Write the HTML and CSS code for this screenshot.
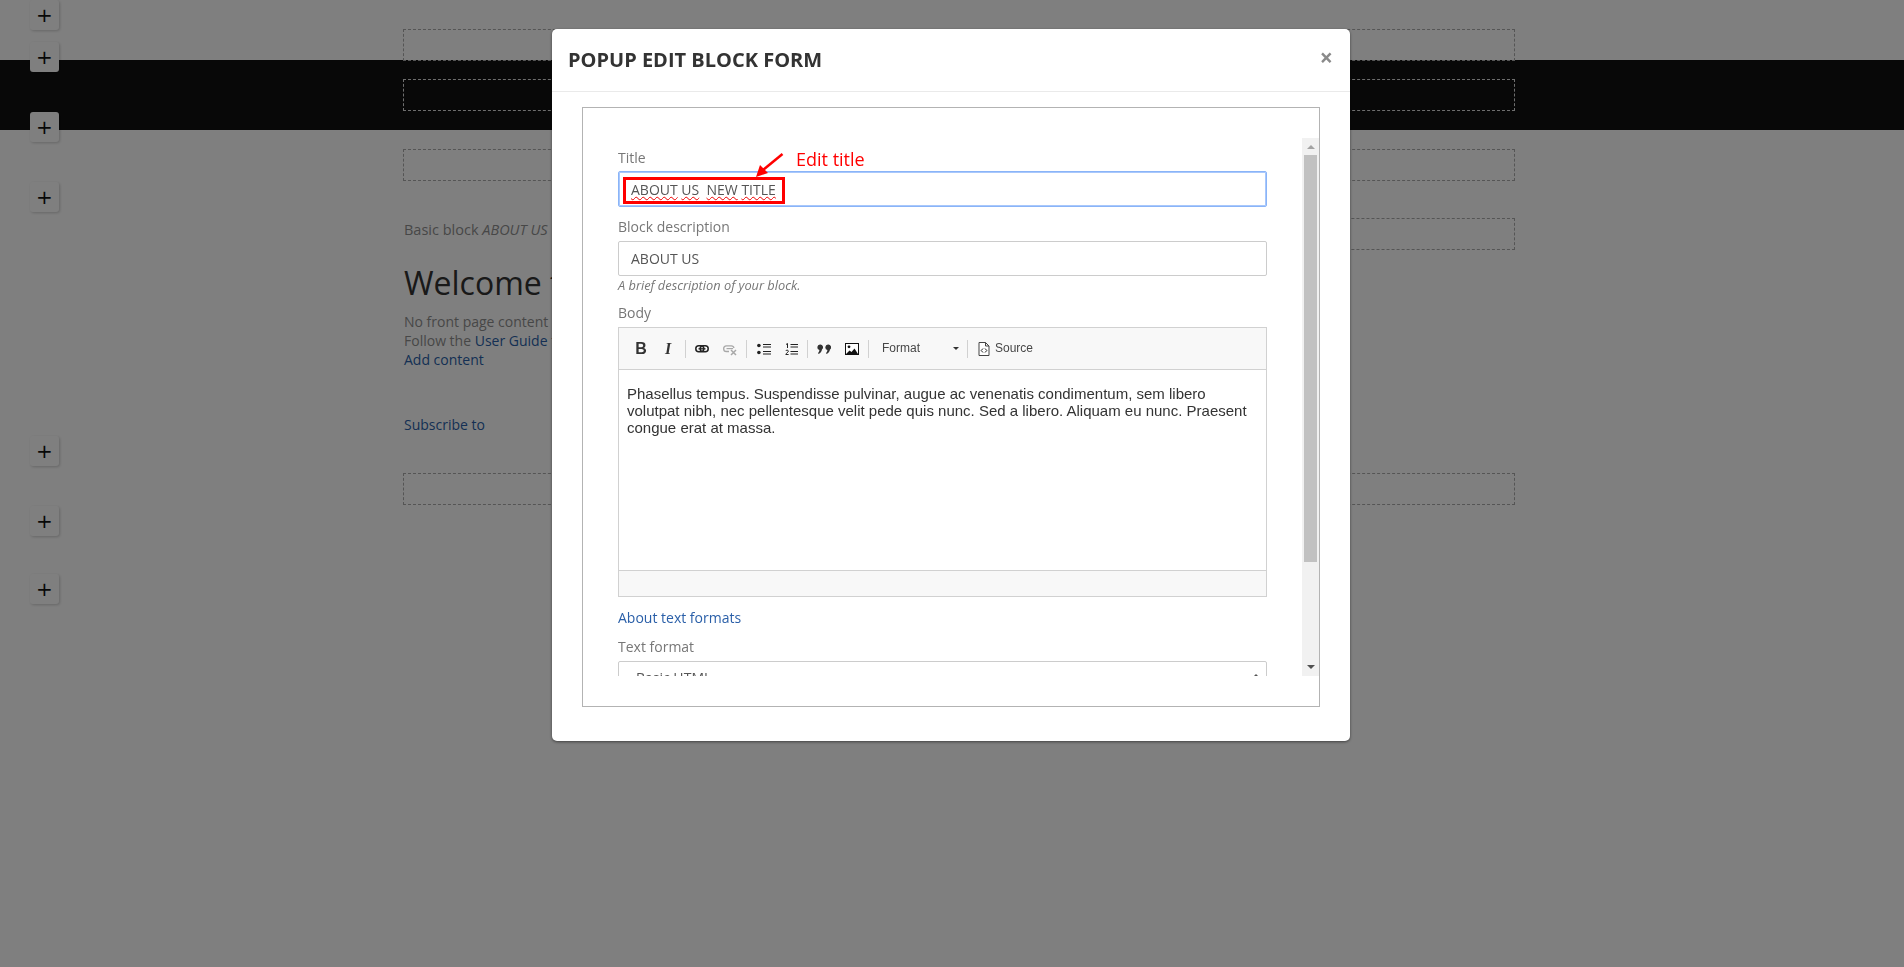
FILE: index.html
```html
<!DOCTYPE html>
<html lang="en">
    <head>
        <meta charset="UTF-8" />
        <title>Popup edit block form</title>
        <link rel="stylesheet" href="styles.css">
    </head>
    <body>
        <div class="page">
            <div class="rail">
                <button class="add add-1">+</button>
                <button class="add add-2">+</button>
                <button class="add add-3">+</button>
                <button class="add add-4">+</button>
                <button class="add add-5">+</button>
                <button class="add add-6">+</button>
                <button class="add add-7">+</button>
            </div>

            <div class="content">
                <div class="slot slot-1"></div>
                <div class="slot slot-2"></div>
                <div class="slot slot-3"></div>

                <div class="columns">
                    <div class="main">
                        <p class="block-note">Basic block <em>ABOUT US</em></p>
                        <h1>Welcome to</h1>
                        <p>No front page content<br>
                        Follow the <a href="#">User Guide</a> to<br>
                        <a href="#">Add content</a></p>
                        <p class="subscribe"><a href="#">Subscribe to</a></p>
                    </div>
                    <div class="slot slot-side"></div>
                </div>

                <div class="slot slot-last"></div>
            </div>
        </div>

        <div class="overlay">
            <div class="modal">
                <div class="modal-head">
                    <h2>Popup edit block form</h2>
                    <span class="close">×</span>
                </div>

                <div class="frame">
                    <div class="form">
                        <div class="field field-title">
                            <label>Title</label>
                            <div class="input input-focus">
                                <span class="typo">ABOUT</span> <span class="typo">US</span>&nbsp; <span class="typo">NEW</span> <span class="typo">TITLE</span>
                            </div>
                            <div class="mark-box"></div>
                            <svg class="mark-arrow" width="34" height="28" viewBox="0 0 34 28">
                                <path d="M29.5 2 L10 18" stroke="#f00" stroke-width="2.5" fill="none" />
                                <path d="M3 25 L7 13 L15 21 Z" fill="#f00" />
                            </svg>
                            <span class="mark-text">Edit title</span>
                        </div>

                        <div class="field field-desc">
                            <label>Block description</label>
                            <div class="input">ABOUT US</div>
                            <div class="hint">A brief description of your block.</div>
                        </div>

                        <div class="field field-body">
                            <label>Body</label>
                            <div class="editor">
                                <div class="toolbar">
                                    <span class="tool tool-b">B</span>
                                    <span class="tool tool-i">I</span>
                                    <span class="sep sep-1"></span>
                                    <svg class="icon icon-link" width="14" height="16" viewBox="0 0 14 16">
                                        <rect x="0.8" y="4.8" width="8" height="6" rx="3" fill="none" stroke="#222" stroke-width="1.5" />
                                        <rect x="5.2" y="4.8" width="8" height="6" rx="3" fill="none" stroke="#222" stroke-width="1.5" />
                                        <path d="M3.5 7.8 H10.5" stroke="#222" stroke-width="1.3" />
                                    </svg>
                                    <svg class="icon icon-unlink" width="14" height="16" viewBox="0 0 14 16">
                                        <path d="M6 10.5 H3.5 A2.8 2.8 0 0 1 3.5 4.8 H8 A2.8 2.8 0 0 1 11 7" fill="none" stroke="#a8a8a8" stroke-width="1.3" />
                                        <path d="M3.5 7.6 H10" stroke="#a8a8a8" stroke-width="1.2" />
                                        <path d="M8 9 L13 14 M13 9 L8 14" stroke="#a8a8a8" stroke-width="1.5" />
                                    </svg>
                                    <span class="sep sep-2"></span>
                                    <svg class="icon icon-bullets" width="14" height="16" viewBox="0 0 14 16">
                                        <circle cx="1.9" cy="4.5" r="1.8" fill="#222" />
                                        <circle cx="1.9" cy="11.5" r="1.8" fill="#222" />
                                        <path d="M6 3.5 H14 M6 6 H14 M6 10.5 H14 M6 13 H14" stroke="#222" stroke-width="1" />
                                    </svg>
                                    <svg class="icon icon-numbers" width="13" height="16" viewBox="0 0 13 16">
                                        <path d="M1 3.5 L2.5 2.5 V7 M5.5 3.5 H13 M5.5 6 H13 M5.5 10.5 H13 M5.5 13 H13" stroke="#222" stroke-width="1" fill="none" />
                                        <path d="M0.8 10 C1 8.8 3.4 8.8 3.4 10.2 C3.4 11.4 1 12 0.8 13.5 H3.6" stroke="#222" stroke-width="1" fill="none" />
                                    </svg>
                                    <span class="sep sep-3"></span>
                                    <svg class="icon icon-quote" width="14" height="16" viewBox="0 0 14 16">
                                        <path d="M3 3.5 A2.8 2.8 0 0 1 5 8.5 C4.6 10.5 3.4 12 1.6 13 L1 12 C1.8 11.2 2.3 10.4 2.4 9 A2.8 2.8 0 0 1 3 3.5 Z" fill="#333" />
                                        <path d="M11 3.5 A2.8 2.8 0 0 1 13 8.5 C12.6 10.5 11.4 12 9.6 13 L9 12 C9.8 11.2 10.3 10.4 10.4 9 A2.8 2.8 0 0 1 11 3.5 Z" fill="#333" />
                                    </svg>
                                    <svg class="icon icon-image" width="14" height="16" viewBox="0 0 14 16">
                                        <rect x="0.5" y="2.5" width="13" height="11" fill="#fff" stroke="#111" />
                                        <circle cx="4" cy="5.8" r="1.4" fill="#111" />
                                        <path d="M1 13 L4.5 9.5 L6.5 11 L9.5 7.5 L13 13 Z" fill="#111" />
                                    </svg>
                                    <span class="sep sep-4"></span>
                                    <span class="combo">Format</span>
                                    <span class="combo-arrow"></span>
                                    <span class="sep sep-5"></span>
                                    <svg class="icon icon-source" width="12" height="16" viewBox="0 0 12 16">
                                        <path d="M1 1.5 H7.5 L11 5 V14.5 H1 Z M7.5 1.5 V5 H11" fill="#fff" stroke="#444" />
                                        <path d="M5 7.5 L3.2 9.5 L5 11.5 M7 7.5 L8.8 9.5 L7 11.5" fill="none" stroke="#222" />
                                    </svg>
                                    <span class="source">Source</span>
                                </div>
                                <div class="editor-text">Phasellus tempus. Suspendisse pulvinar, augue ac venenatis condimentum, sem libero volutpat nibh, nec pellentesque velit pede quis nunc. Sed a libero. Aliquam eu nunc. Praesent congue erat at massa.</div>
                                <div class="editor-foot"></div>
                            </div>
                        </div>

                        <a class="about" href="#">About text formats</a>

                        <div class="field field-format">
                            <label>Text format</label>
                            <div class="input select">Basic HTML</div>
                        </div>
                    </div>

                    <div class="scrollbar">
                        <span class="sb-btn"><i class="sb-up"></i></span>
                        <span class="sb-thumb"></span>
                        <span class="sb-rest"><i class="sb-down"></i></span>
                    </div>
                </div>
            </div>
        </div>
    </body>
</html>
```

FILE: styles.css
```css
html, body {
    margin: 0;
    height: 100%;
    overflow: hidden;
}
body {
    font-family: "Open Sans", sans-serif;
    font-size: 14px;
    line-height: 19px;
    color: #8f8f8f;
    background: #fff;
}
a {
    color: #2a5fa8;
    text-decoration: none;
}

/* page behind the popup */
.page {
    display: flex;
    height: 967px;
    background: linear-gradient(#fff 60px, #111 60px, #111 130px, #fff 130px);
}
.rail {
    width: 403px;
    padding-left: 30px;
    box-sizing: border-box;
    display: flex;
    flex-direction: column;
    align-items: flex-start;
}
.add {
    width: 29px;
    height: 30px;
    padding: 0;
    border: 0;
    border-radius: 3px;
    background: #fff;
    box-shadow: 1px 1px 3px rgba(0, 0, 0, 0.2);
    font-family: "DejaVu Sans", sans-serif;
    font-size: 20px;
    line-height: 28px;
    color: #111;
}
.add-2 { margin-top: 12px; }
.add-3 { margin-top: 40px; }
.add-4 { margin-top: 40px; }
.add-5 { margin-top: 224px; }
.add-6 { margin-top: 40px; }
.add-7 { margin-top: 38px; }

.content {
    width: 1112px;
}
.slot {
    height: 32px;
    border: 1px dashed #aaa;
    box-sizing: border-box;
}
.slot-1 { margin-top: 29px; }
.slot-2 { margin-top: 18px; border-color: #ddd; }
.slot-3 { margin-top: 38px; }
.columns {
    display: flex;
    justify-content: space-between;
    margin-top: 38px;
}
.main {
    width: 148px;
    margin-top: 1px;
    padding-left: 1px;
    white-space: nowrap;
    overflow: hidden;
}
.main p {
    margin: 0;
}
.main .block-note {
    font-size: 14.5px;
}
.main h1 {
    margin: 22px 0 7px;
    font-size: 32px;
    line-height: 44px;
    font-weight: 400;
    color: #333;
}
.main .subscribe {
    margin-top: 46px;
}
.slot-side {
    width: 550px;
    margin-top: -1px;
}
.slot-last {
    margin-top: 39px;
}

/* popup */
.overlay {
    position: fixed;
    top: 0;
    left: 0;
    right: 0;
    bottom: 0;
    background: rgba(0, 0, 0, 0.5);
}
.modal {
    width: 798px;
    height: 712px;
    margin: 29px 0 0 552px;
    background: #fff;
    border-radius: 5px;
    box-shadow: 0 1px 3px rgba(0, 0, 0, 0.5);
    box-sizing: border-box;
}
.modal-head {
    display: flex;
    justify-content: space-between;
    height: 62px;
    padding: 0 17px 0 16px;
    border-bottom: 1px solid #eaeaea;
}
.modal-head h2 {
    margin: 17px 0 0;
    font-size: 20px;
    line-height: 28px;
    font-weight: 700;
    text-transform: uppercase;
    color: #333;
}
.close {
    margin-top: 13px;
    font-size: 23px;
    line-height: 30px;
    font-weight: 700;
    color: #8a8a8a;
}
.frame {
    display: flex;
    align-items: flex-start;
    width: 738px;
    height: 600px;
    margin: 15px 0 0 30px;
    padding-top: 30px;
    border: 1px solid #b3b3b3;
    box-sizing: border-box;
}
.form {
    flex: 1;
    height: 538px;
    padding: 9px 35px 0 35px;
    overflow: hidden;
    box-sizing: border-box;
}
.field {
    position: relative;
}
.field label {
    display: block;
    height: 24px;
    line-height: 20px;
    color: #777;
}
.field-title label {
    line-height: 22px;
}
.input {
    height: 35px;
    padding: 0 12px;
    border: 1px solid #ccc;
    border-radius: 2px;
    line-height: 33px;
    color: #555;
    box-sizing: border-box;
}
.input-focus {
    height: 36px;
    border: 1px solid #8ab4f8;
    box-shadow: 0 0 0 1px #a9c8fb inset;
    line-height: 35px;
}
.typo {
    text-decoration: underline wavy #e00;
    text-decoration-thickness: 1px;
}
.mark-box {
    position: absolute;
    left: 5px;
    top: 30px;
    width: 162px;
    height: 27px;
    border: 3px solid #f00;
    box-sizing: border-box;
}
.mark-arrow {
    position: absolute;
    left: 135px;
    top: 5px;
}
.mark-text {
    position: absolute;
    left: 178px;
    top: 0;
    font-size: 18px;
    line-height: 24px;
    color: #f00;
}
.field-desc {
    margin-top: 10px;
}
.hint {
    font-size: 12.8px;
    font-style: italic;
    line-height: 18px;
    color: #777;
}
.field-body {
    margin-top: 9px;
}

/* ckeditor */
.editor {
    border: 1px solid #d1d1d1;
    box-sizing: border-box;
}
.toolbar {
    display: flex;
    align-items: center;
    height: 42px;
    padding-left: 16px;
    background: #f8f8f8;
    border-bottom: 1px solid #d1d1d1;
    font-family: "Liberation Sans", Arial, sans-serif;
    font-size: 12px;
    color: #474747;
    box-sizing: border-box;
}
.tool {
    width: 12px;
    color: #333;
    font-size: 16px;
    font-weight: 700;
    text-align: center;
}
.tool-i {
    margin-left: 15px;
    font-family: "Liberation Serif", serif;
    font-style: italic;
}
.sep {
    width: 1px;
    height: 18px;
    background: #d1d1d1;
}
.sep-1 { margin-left: 11px; }
.icon { flex: none; }
.icon-link { margin-left: 9px; }
.icon-unlink { margin-left: 14px; }
.sep-2 { margin-left: 9px; }
.icon-bullets { margin-left: 10px; }
.icon-numbers { margin-left: 14px; }
.sep-3 { margin-left: 9px; }
.icon-quote { margin-left: 9px; }
.icon-image { margin-left: 14px; }
.sep-4 { margin-left: 9px; }
.combo {
    width: 71px;
    margin-left: 13px;
}
.combo-arrow {
    width: 0;
    height: 0;
    border: 3px solid transparent;
    border-top: 3px solid #333;
    border-bottom: 0;
}
.sep-5 { margin-left: 8px; }
.icon-source { margin-left: 10px; }
.source { margin-left: 5px; }
.editor-text {
    height: 200px;
    padding: 15px 14px 0 8px;
    font-family: "Liberation Sans", Arial, sans-serif;
    font-size: 15px;
    line-height: 17px;
    color: #333;
    box-sizing: border-box;
}
.editor-foot {
    height: 26px;
    background: #f8f8f8;
    border-top: 1px solid #d1d1d1;
    box-sizing: border-box;
}
.about {
    display: block;
    margin-top: 11px;
    line-height: 20px;
}
.field-format {
    margin-top: 9px;
}
.select {
    position: relative;
    height: 36px;
    padding-left: 17px;
    line-height: 32px;
}
.select::after {
    content: "";
    position: absolute;
    right: 7px;
    top: 12px;
    width: 0;
    height: 0;
    border-left: 3px solid transparent;
    border-right: 3px solid transparent;
    border-bottom: 3px solid #555;
}

/* scrollbar of the frame */
.scrollbar {
    display: flex;
    flex-direction: column;
    align-items: center;
    flex: none;
    width: 17px;
    height: 538px;
    background: #f1f1f1;
}
.sb-btn {
    display: flex;
    justify-content: center;
    padding-top: 7px;
    height: 17px;
    box-sizing: border-box;
}
.sb-thumb {
    width: 13px;
    height: 407px;
    background: #c1c1c1;
}
.sb-rest {
    flex: 1;
    display: flex;
    align-items: flex-end;
    padding-bottom: 7px;
}
.sb-up, .sb-down {
    width: 0;
    height: 0;
    border-left: 4px solid transparent;
    border-right: 4px solid transparent;
}
.sb-up { border-bottom: 4px solid #a3a3a3; }
.sb-down { border-top: 4px solid #505050; }
```
